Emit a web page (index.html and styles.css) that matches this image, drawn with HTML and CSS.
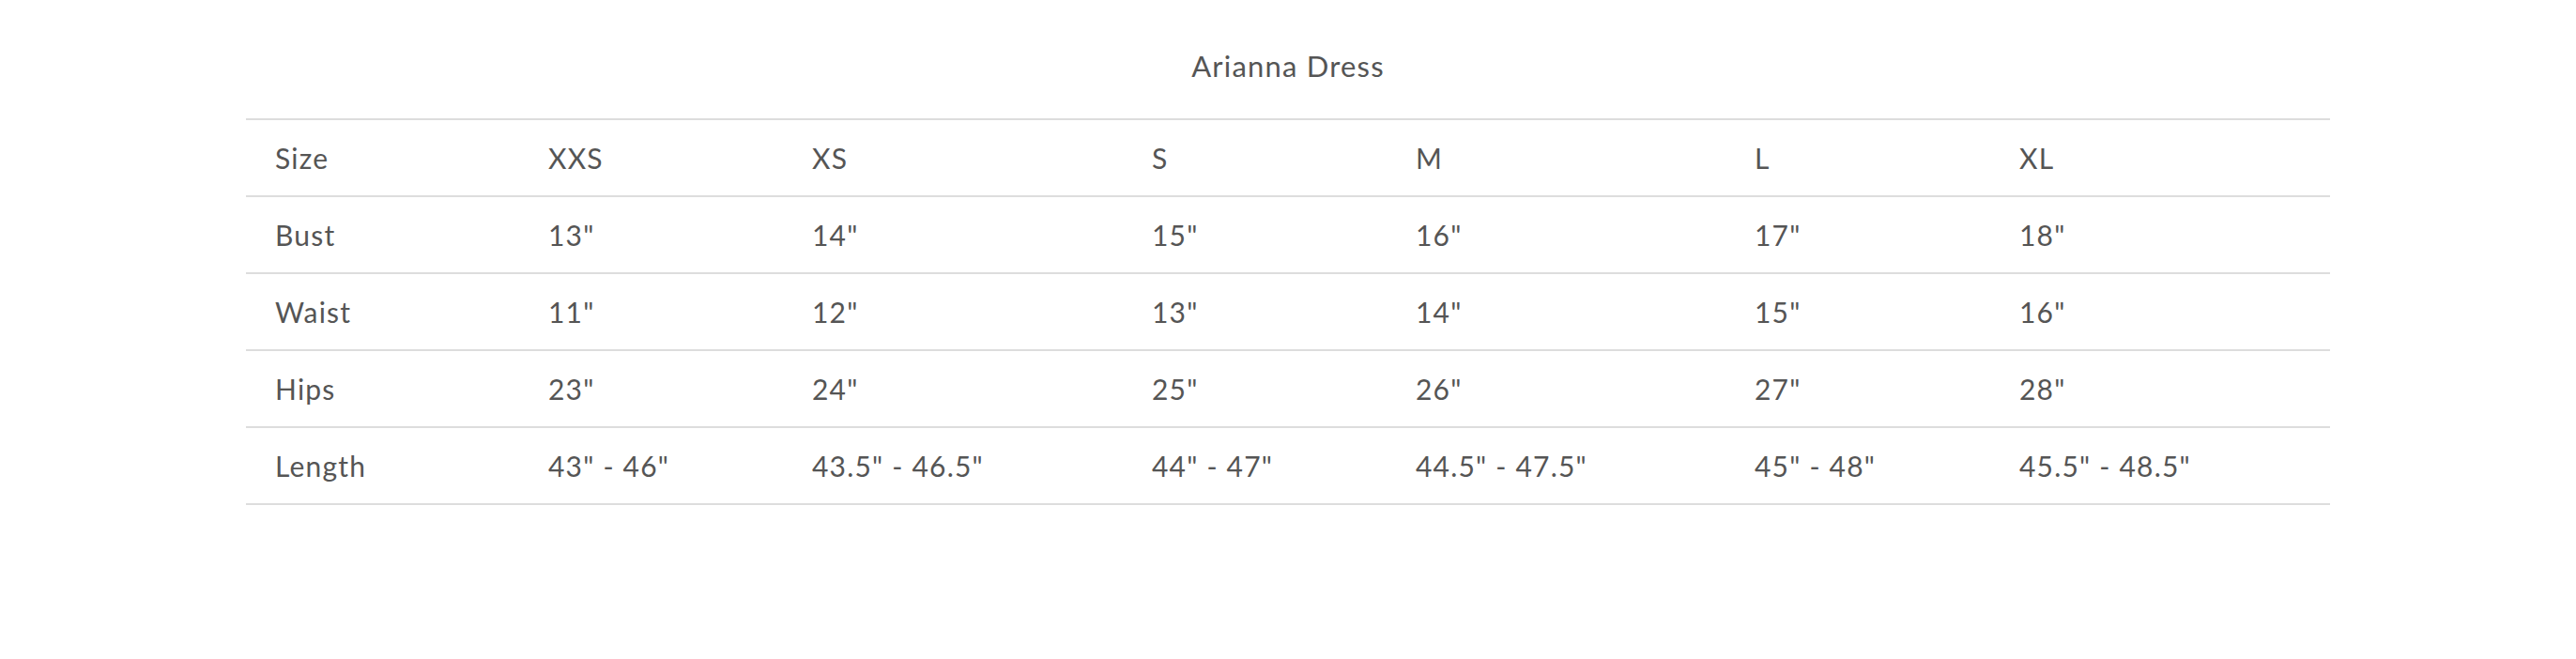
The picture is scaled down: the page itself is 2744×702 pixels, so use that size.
FILE: index.html
```html
<!DOCTYPE html>
<html>
<head>
<meta charset="utf-8">
<link rel="stylesheet" href="styles.css">
</head>
<body>
<div class="page">
  <h2 class="title">Arianna Dress</h2>
  <table class="sizes">
    <colgroup>
      <col class="c1"><col class="c2"><col class="c3"><col class="c4"><col class="c5"><col class="c6"><col class="c7">
    </colgroup>
    <tbody>
      <tr><td>Size</td><td>XXS</td><td>XS</td><td>S</td><td>M</td><td>L</td><td>XL</td></tr>
      <tr><td>Bust</td><td>13"</td><td>14"</td><td>15"</td><td>16"</td><td>17"</td><td>18"</td></tr>
      <tr><td>Waist</td><td>11"</td><td>12"</td><td>13"</td><td>14"</td><td>15"</td><td>16"</td></tr>
      <tr><td>Hips</td><td>23"</td><td>24"</td><td>25"</td><td>26"</td><td>27"</td><td>28"</td></tr>
      <tr><td>Length</td><td>43" - 46"</td><td>43.5" - 46.5"</td><td>44" - 47"</td><td>44.5" - 47.5"</td><td>45" - 48"</td><td>45.5" - 48.5"</td></tr>
    </tbody>
  </table>
</div>
</body>
</html>
```
FILE: styles.css
```css
html, body {
  margin: 0;
  padding: 0;
  background: #fff;
}
.page {
  width: 2220px;
  margin: 0 auto;
  padding-top: 50px;
  font-family: Lato, "Liberation Sans", sans-serif;
  color: #555;
}
.title {
  margin: 0 0 36px;
  font-weight: 400;
  font-size: 31px;
  line-height: 40px;
  text-align: center;
  letter-spacing: 1.2px;
}
.sizes {
  width: 2220px;
  border-collapse: collapse;
  table-layout: fixed;
  border-top: 2px solid #ddd;
}
.sizes td {
  height: 80px;
  padding: 0 0 0 31px;
  border-bottom: 2px solid #ddd;
  font-size: 30px;
  letter-spacing: 1.2px;
  vertical-align: middle;
  white-space: nowrap;
}
.c1 { width: 291px; }
.c2 { width: 281px; }
.c3 { width: 362px; }
.c4 { width: 281px; }
.c5 { width: 361px; }
.c6 { width: 282px; }
.c7 { width: 362px; }
```
